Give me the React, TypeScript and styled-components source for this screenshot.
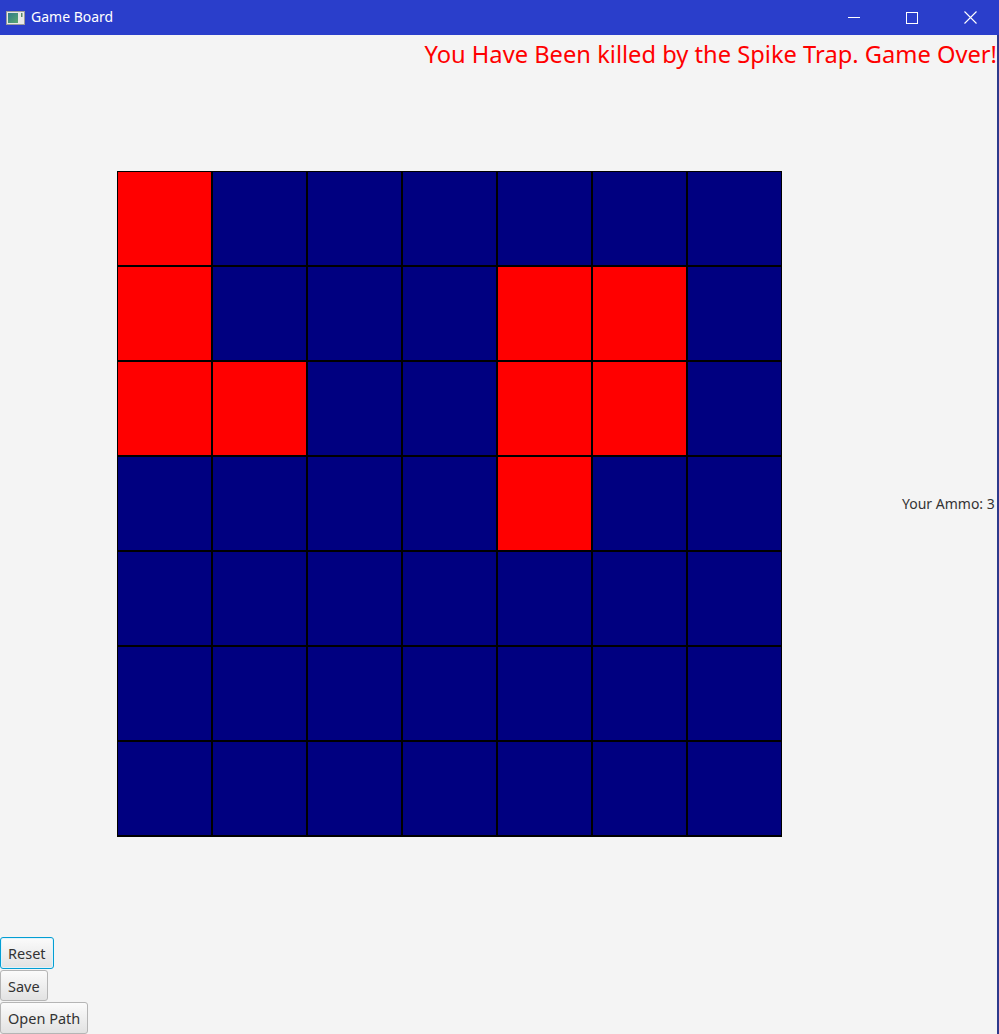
import React from "react";
import styled, { createGlobalStyle } from "styled-components";

const Global = createGlobalStyle`
  html, body { margin: 0; padding: 0; background: #f4f4f4; }
  body { width: 999px; height: 1034px; overflow: hidden; font-family: "Noto Sans", "Open Sans", sans-serif; }
`;

const Window = styled.div`
  width: 999px;
  height: 1034px;
  display: flex;
  flex-direction: column;
  background: #f4f4f4;
`;

const TitleBar = styled.div`
  height: 35px;
  flex: 0 0 35px;
  background: #2a3ecb;
  display: flex;
  align-items: center;
  color: #fff;
`;

const AppIcon = styled.svg`
  margin-left: 6px;
  margin-right: 6px;
`;

const Title = styled.span`
  font-family: "Noto Sans", "Open Sans", sans-serif;
  font-size: 14px;
  flex: 1;
  margin-top: -2px;
`;

const Ctl = styled.div`
  width: 58px;
  height: 35px;
  display: flex;
  align-items: center;
  justify-content: center;
`;

const Body = styled.div`
  flex: 1;
  display: flex;
  min-height: 0;
`;

const Content = styled.div`
  flex: 1;
  display: flex;
  flex-direction: column;
  min-width: 0;
`;

const EdgeStrip = styled.div`
  width: 2px;
  background: #2d3a8c;
`;

const Header = styled.div`
  height: 40px;
  display: flex;
  justify-content: flex-end;
  align-items: center;
  color: #ff0000;
  font-size: 23.7px;
  white-space: nowrap;
  margin-top: -1px;
  margin-bottom: 1px;
`;

const Middle = styled.div`
  flex: 1;
  display: flex;
  align-items: center;
`;

const Center = styled.div`
  flex: 1;
  display: flex;
  justify-content: center;
  align-items: center;
  padding-right: 4px;
  padding-bottom: 2px;
`;

const Grid = styled.div`
  display: grid;
  grid-template-columns: repeat(7, 95px);
  grid-template-rows: repeat(7, 95px);
  border-bottom: 1px solid #000;
`;

const Cell = styled.div<{ $red: boolean }>`
  box-sizing: border-box;
  border: 1px solid #000;
  background: ${(p) => (p.$red ? "#ff0000" : "#000080")};
`;

const Ammo = styled.div`
  width: 95px;
  font-size: 14px;
  color: #333;
  white-space: nowrap;
  margin-bottom: 4px;
`;

const Footer = styled.div`
  display: flex;
  flex-direction: column;
  align-items: flex-start;
  gap: 1px;
  padding-top: 2px;
`;

const Btn = styled.button<{ $focused?: boolean; $h?: number }>`
  box-sizing: border-box;
  height: ${(p) => p.$h ?? 31}px;
  margin: 0;
  padding: 0 7px;
  font-family: "Noto Sans", "Open Sans", sans-serif;
  font-size: 14.5px;
  color: #333;
  border-radius: 3px;
  border: 1px solid ${(p) => (p.$focused ? "#039ed3" : "#b5b5b5")};
  background: linear-gradient(#fbfbfb, #e2e2e2);
  box-shadow: ${(p) => (p.$focused ? "inset 0 0 0 1px #dff3fb" : "none")};
  text-align: left;
`;

const redCells = new Set(["0,0", "1,0", "2,0", "2,1", "1,4", "1,5", "2,4", "2,5", "3,4"]);

export default function App() {
  const cells = [];
  for (let r = 0; r < 7; r++) {
    for (let c = 0; c < 7; c++) {
      cells.push(<Cell key={`${r}-${c}`} $red={redCells.has(`${r},${c}`)} />);
    }
  }
  return (
    <>
      <Global />
      <Window>
        <TitleBar>
          <AppIcon width="19" height="14" viewBox="0 0 19 14">
            <rect x="0.5" y="0.5" width="18" height="13" fill="#e8e8e8" stroke="#9a9a9a" />
            <defs>
              <linearGradient id="g" x1="0" y1="0" x2="1" y2="1">
                <stop offset="0" stopColor="#2f7a8a" />
                <stop offset="1" stopColor="#5aa870" />
              </linearGradient>
            </defs>
            <rect x="2" y="2" width="10" height="10" fill="url(#g)" />
            <rect x="15" y="2" width="1.5" height="4" fill="#5a8a6a" />
          </AppIcon>
          <Title>Game Board</Title>
          <Ctl>
            <svg width="12" height="12" viewBox="0 0 12 12">
              <line x1="0" y1="5.5" x2="12" y2="5.5" stroke="#fff" strokeWidth="1" />
            </svg>
          </Ctl>
          <Ctl>
            <svg width="12" height="12" viewBox="0 0 12 12">
              <rect x="0.5" y="0.5" width="11" height="11" fill="none" stroke="#fff" strokeWidth="1" />
            </svg>
          </Ctl>
          <Ctl>
            <svg width="13" height="13" viewBox="0 0 13 13">
              <path d="M0.5 0.5 L12.5 12.5 M12.5 0.5 L0.5 12.5" stroke="#fff" strokeWidth="1.1" />
            </svg>
          </Ctl>
        </TitleBar>
        <Body>
          <Content>
            <Header>You Have Been killed by the Spike Trap. Game Over!</Header>
            <Middle>
              <Center>
                <Grid>{cells}</Grid>
              </Center>
              <Ammo>Your Ammo: 3</Ammo>
            </Middle>
            <Footer>
              <Btn $focused $h={32}>Reset</Btn>
              <Btn>Save</Btn>
              <Btn $h={32}>Open Path</Btn>
            </Footer>
          </Content>
          <EdgeStrip />
        </Body>
      </Window>
    </>
  );
}
